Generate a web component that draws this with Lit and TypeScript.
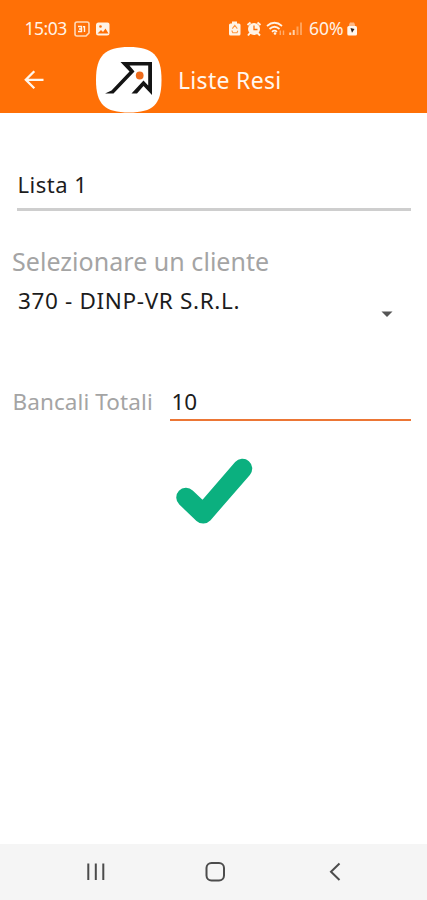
import { LitElement, html, css } from "lit";
import { customElement } from "lit/decorators.js";

@customElement("status-bar")
class StatusBar extends LitElement {
  static styles = css`
    :host { display: flex; height: 47px; padding-top: 11px; box-sizing: border-box; color: #fff3e6; font-size: 17.5px; line-height: 35px; }
    .time { width: 49px; padding-left: 24.5px; box-sizing: content-box; margin-right: 0.5px; letter-spacing: -0.5px; }
    .pct { letter-spacing: 0; width: 37px; }
    svg { display: block; }
  `;
  render() {
    return html`
      <span class="time">15:03</span>
      <svg width="154" height="36" viewBox="74 11 154 36" fill="none" stroke="#ffd9b8">
        <path d="M77 22h10a2 2 0 0 1 2 2v9l-3 3H77a2 2 0 0 1-2-2V24a2 2 0 0 1 2-2z" stroke-width="1.6"/>
        <path d="M78 26.500h3.500v5H78M79 29h2.500M84.500 26v6M83 26.700h1.500" stroke="#fff3e6" stroke-width="1.4"/>
        <path d="M99 22.500h8.500a2 2 0 0 1 2 2V33a2.500 2.500 0 0 1-2.500 2.500H98.500a2.500 2.500 0 0 1-2.500-2.500V25a2.500 2.500 0 0 1 3-2.500z" fill="#fff3e6" stroke="none"/>
        <path d="M97.500 33.500l3.500-3.500 2 2 2.500-3.500 3 5z" fill="#ff7006" stroke="none"/>
        <circle cx="100.500" cy="26.500" r="1.300" fill="#ff7006" stroke="none"/>
      </svg>
      <svg width="81" height="36" viewBox="228 11 81 36" fill="none" stroke="#fff3e6">
        <path d="M232 21.500h5v2h2a1.500 1.500 0 0 1 1.500 1.500v9a1.500 1.500 0 0 1-1.500 1.500h-8.500a1.500 1.500 0 0 1-1.500-1.500v-9a1.500 1.500 0 0 1 1.500-1.500h1.500z" fill="#fff3e6" stroke="none"/>
        <path d="M232.300 28.700l2.500-3.200 2.500 3.200M231.800 30.500l1 2.200h4.200l.8-2" stroke="#ff963f" stroke-width="1.100"/>
        <path d="M247.500 25l3-2.500M260.500 25l-3-2.500M250 33l-2 2.500M257.500 33l2.500 2.500" stroke-width="2"/>
        <circle cx="254" cy="29" r="6" fill="#fff3e6" stroke="none"/>
        <path d="M254 25.500V29.500h3.500" stroke="#ff7006" stroke-width="1.300"/>
        <path d="M267 26Q274.500 19.500 282 26M269.500 29q5-4.500 10 0M272 31.800q2.500-2.200 5 0" stroke-width="1.700"/>
        <circle cx="275" cy="33.500" r="1.300" fill="#fff3e6" stroke="none"/>
        <path d="M280.300 30.500v4.500M283.500 30.500v4.500" stroke="#ffad6c" stroke-width="1.400"/>
        <path d="M290.200 32.500V35M293.700 30v5" stroke="#ffd4ae" stroke-width="2"/>
        <path d="M297.500 26.500V35M301 22.500V35" stroke="#ffa25a" stroke-width="2"/>
      </svg>
      <span class="pct">60%</span>
      <svg width="14" height="36" viewBox="346 11 14 36">
        <path d="M349 26.500v-2l1-2h4l1 2v2" fill="#ffb681"/>
        <rect x="347.300" y="26" width="9.700" height="9.500" rx="1.500" fill="#fff6ed"/>
        <path d="M350.500 28l4 1-2.500 3.700z" fill="#352015"/>
      </svg>
    `;
  }
}

@customElement("title-bar")
class TitleBar extends LitElement {
  static styles = css`
    :host { display: flex; height: 66px; color: #fff6ed; }
    .back { margin-left: 24px; width: 72px; flex: none; }
    .logo { width: 66px; flex: none; }
    .title { margin-left: 16px; font-size: 23px; line-height: 67px; letter-spacing: 0.3px; }
  `;
  render() {
    return html`
      <svg class="back" height="66" viewBox="24 47 72 66" fill="none" stroke="#fff6ed" stroke-width="2.300">
        <path d="M43.500 79.800H26M34.300 71.300l-8.500 8.500 8.500 8.500"/>
      </svg>
      <svg class="logo" height="66" viewBox="96 47 66 66">
        <path d="M129 47C153 47 161.500 55.500 161.500 80S153 112.500 129 112.500 96 104.500 96 80 105 47 129 47z" fill="#fff"/>
        <path d="M120.500 62H152V95L143.500 86 137 93.500H131.500L143.500 80.500 148.200 85.500V65.500H129.500L134.500 71.500 113.500 93.500H105L111.500 90.500 129.500 71.500z" fill="#141414"/>
        <circle cx="139.700" cy="75.500" r="3.900" fill="#ed6b1c"/>
      </svg>
      <span class="title">Liste Resi</span>
    `;
  }
}

@customElement("nav-bar")
class NavBar extends LitElement {
  static styles = css`
    :host { display: block; height: 56px; background: #f5f5f5; }
    svg { display: block; }
  `;
  render() {
    return html`
      <svg width="427" height="56" viewBox="0 844 427 56" fill="none" stroke="#4c4c4c" stroke-width="2">
        <path d="M88.300 863.500V880M95.800 863.500V880M103.300 863.500V880"/>
        <rect x="206.500" y="863" width="17.500" height="17.500" rx="5"/>
        <path d="M339.500 863.500L331 871.800 339.500 880"/>
      </svg>
    `;
  }
}

@customElement("app-root")
class AppRoot extends LitElement {
  static styles = css`
    :host { display: flex; flex-direction: column; height: 900px; background: #fff; overflow: hidden; font-family: "Noto Sans", sans-serif; white-space: nowrap; }
    header { background: #ff7006; height: 113px; flex: none; }
    main { flex: 1; padding: 55px 16px 0 13px; color: #1c1c1c; }
    .field { font-size: 22px; line-height: 32px; height: 40px; margin-left: 4px; border-bottom: 3px solid #cecece; letter-spacing: 0.5px; text-indent: 0.5px; }
    .label { color: #a4a4a4; }
    .caption { font-size: 25px; line-height: 34px; margin: 33px 0 0 -1px; letter-spacing: 0.04px; }
    .select { display: flex; justify-content: space-between; padding: 0 18px 0 5px; font-size: 22.5px; line-height: 34px; margin-top: 6px; letter-spacing: 0.65px; }
    .caret { margin-top: 27px; }
    .total { display: flex; justify-content: space-between; margin-top: 67px; font-size: 22.5px; line-height: 34px; }
    .total .label { margin-left: -0.5px; letter-spacing: 0.1px; }
    .amount { width: 241px; height: 34px; border-bottom: 2px solid #ec7635; }
    .amount span { margin-left: 1.5px; }
    .check { display: block; margin: 36px 0 0 162px; }
  `;
  render() {
    return html`
      <header><status-bar></status-bar><title-bar></title-bar></header>
      <main>
        <div class="field">Lista 1</div>
        <div class="label caption">Selezionare un cliente</div>
        <div class="select">
          <span>370 - DINP-VR S.R.L.</span>
          <svg class="caret" width="12" height="7" viewBox="0 0 12 7"><path d="M.500.500H11.500L6 6z" fill="#555"/></svg>
        </div>
        <div class="total">
          <span class="label">Bancali Totali</span>
          <div class="amount"><span>10</span></div>
        </div>
        <svg class="check" width="78" height="68" viewBox="175 457 78 68">
          <path d="M186 497.500L203.200 513.800 242.500 468.500" fill="none" stroke="#0bb07f" stroke-width="19.500" stroke-linecap="round" stroke-linejoin="round"/>
        </svg>
      </main>
      <nav-bar></nav-bar>
    `;
  }
}
